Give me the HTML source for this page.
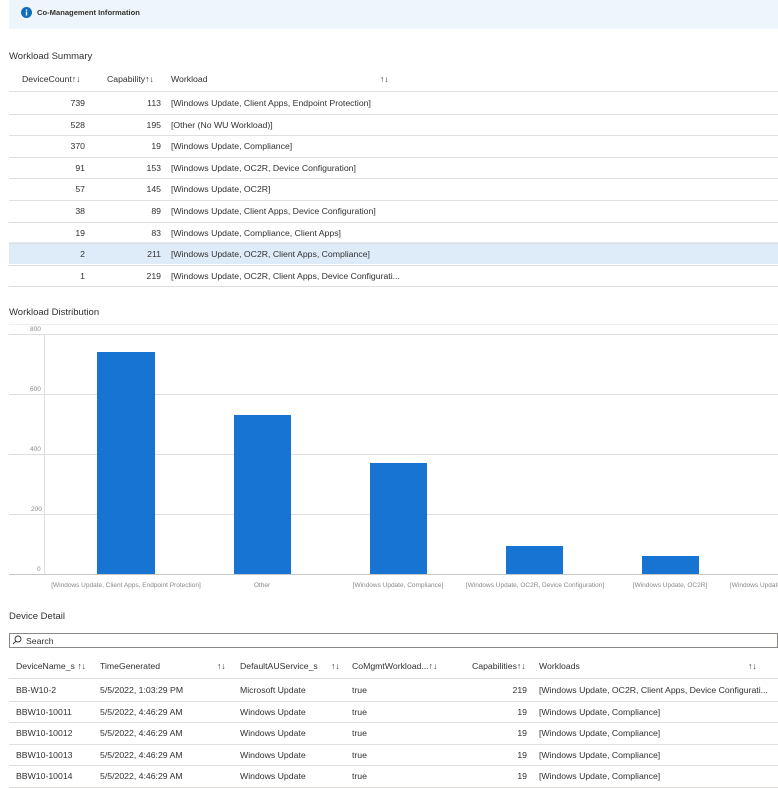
<!DOCTYPE html>
<html><head><meta charset="utf-8"><style>
*{margin:0;padding:0;box-sizing:border-box}
body{width:778px;height:785px;overflow:hidden;background:#fff;font-family:"Liberation Sans",sans-serif;font-size:8.7px;color:#323130;position:relative}
.a{position:absolute;white-space:nowrap}
.r{text-align:right}
.line{position:absolute;height:1px;background:#e1dfdd}
.bar{position:absolute;background:#1874d2}
.t{font-size:9.5px;color:#323130}
.ax{position:absolute;font-size:6.5px;color:#8a8886}
.xl{position:absolute;font-size:6.5px;color:#8a8886;text-align:center;white-space:nowrap}
.g{position:absolute;left:9px;right:0;height:1px;background:#e1dfdd}
</style></head><body>
<div class="a" style="left:9px;top:0;width:769px;height:29px;background:#eff5fc"></div>
<svg class="a" style="left:21px;top:7px" width="11" height="11"><circle cx="5.5" cy="5.5" r="5.5" fill="#0f6cbd"/><rect x="4.8" y="4.5" width="1.4" height="4" fill="#fff"/><rect x="4.8" y="2.4" width="1.4" height="1.4" fill="#fff"/></svg>
<div class="a" style="left:37px;top:8px;font-weight:bold;font-size:7.6px">Co-Management Information</div>

<div class="a t" style="left:9px;top:51px">Workload Summary</div>
<div class="a" style="left:22px;top:74px">DeviceCount↑↓</div>
<div class="a" style="left:107px;top:74px">Capability↑↓</div>
<div class="a" style="left:171px;top:74px">Workload</div>
<div class="a" style="left:380px;top:74px">↑↓</div>
<div class="line" style="left:9px;right:0;top:91px"></div>
<div class="a" style="left:9px;top:242px;width:769px;height:22px;background:#deecf9"></div>
<div id="ws"></div>

<div class="a t" style="left:9px;top:307px">Workload Distribution</div>
<div class="g" style="top:324px;background:#f0f0f0"></div>
<div class="g" style="top:334px"></div>
<div class="g" style="top:394px"></div>
<div class="g" style="top:454px"></div>
<div class="g" style="top:514px"></div>
<div class="g" style="top:574px;background:#c8c6c4"></div>
<div class="a" style="left:44px;top:334px;width:1px;height:240px;background:#e1dfdd"></div>
<div class="ax" style="left:30px;top:326px">800</div>
<div class="ax" style="left:30px;top:386px">600</div>
<div class="ax" style="left:30px;top:446px">400</div>
<div class="ax" style="left:31px;top:506px">200</div>
<div class="ax" style="left:37px;top:566px">0</div>
<div class="bar" style="left:97px;top:352px;width:58px;height:222px"></div>
<div class="bar" style="left:234px;top:415px;width:57px;height:159px"></div>
<div class="bar" style="left:370px;top:463px;width:57px;height:111px"></div>
<div class="bar" style="left:506px;top:546px;width:57px;height:28px"></div>
<div class="bar" style="left:642px;top:556px;width:57px;height:18px"></div>
<div class="xl" style="left:26px;width:200px;top:582px">[Windows Update, Client Apps, Endpoint Protection]</div>
<div class="xl" style="left:212px;width:100px;top:582px">Other</div>
<div class="xl" style="left:338px;width:120px;top:582px">[Windows Update, Compliance]</div>
<div class="xl" style="left:455px;width:160px;top:582px">[Windows Update, OC2R, Device Configuration]</div>
<div class="xl" style="left:610px;width:120px;top:582px">[Windows Update, OC2R]</div>
<div class="a" style="left:730px;top:582px;font-size:6.5px;color:#8a8886">[Windows Update</div>

<div class="a t" style="left:9px;top:611px">Device Detail</div>
<div class="a" style="left:9px;top:633px;width:769px;height:15px;border:1px solid #8a8886"></div>
<svg class="a" style="left:12px;top:635px" width="10" height="10"><circle cx="6" cy="4" r="3" fill="none" stroke="#323130" stroke-width="0.9"/><path d="M4 6L1 9" stroke="#323130" stroke-width="1"/></svg>
<div class="a" style="left:26px;top:636px">Search</div>
<div class="a" style="left:16px;top:661px">DeviceName_s ↑↓</div>
<div class="a" style="left:100px;top:661px">TimeGenerated</div>
<div class="a" style="left:217px;top:661px">↑↓</div>
<div class="a" style="left:240px;top:661px">DefaultAUService_s</div>
<div class="a" style="left:331px;top:661px">↑↓</div>
<div class="a" style="left:352px;top:661px">CoMgmtWorkload...↑↓</div>
<div class="a" style="left:472px;top:661px">Capabilities↑↓</div>
<div class="a" style="left:539px;top:661px">Workloads</div>
<div class="a" style="left:748px;top:661px">↑↓</div>
<div class="line" style="left:9px;right:0;top:678px"></div>
<div id="dd"></div>
<script>
var ws=[["739","113","[Windows Update, Client Apps, Endpoint Protection]"],["528","195","[Other (No WU Workload)]"],["370","19","[Windows Update, Compliance]"],["91","153","[Windows Update, OC2R, Device Configuration]"],["57","145","[Windows Update, OC2R]"],["38","89","[Windows Update, Client Apps, Device Configuration]"],["19","83","[Windows Update, Compliance, Client Apps]"],["2","211","[Windows Update, OC2R, Client Apps, Compliance]"],["1","219","[Windows Update, OC2R, Client Apps, Device Configurati..."]];
var h="";
ws.forEach(function(r,i){var y=98+i*21.6;
h+='<div class="a r" style="left:40px;width:45px;top:'+y+'px">'+r[0]+'</div><div class="a r" style="left:120px;width:41px;top:'+y+'px">'+r[1]+'</div><div class="a" style="left:171px;top:'+y+'px">'+r[2]+'</div><div class="line" style="left:9px;right:0;top:'+(y+15.5)+'px"></div>';});
document.getElementById("ws").outerHTML=h;
var dd=[["BB-W10-2","5/5/2022, 1:03:29 PM","Microsoft Update","219","[Windows Update, OC2R, Client Apps, Device Configurati..."],["BBW10-10011","5/5/2022, 4:46:29 AM","Windows Update","19","[Windows Update, Compliance]"],["BBW10-10012","5/5/2022, 4:46:29 AM","Windows Update","19","[Windows Update, Compliance]"],["BBW10-10013","5/5/2022, 4:46:29 AM","Windows Update","19","[Windows Update, Compliance]"],["BBW10-10014","5/5/2022, 4:46:29 AM","Windows Update","19","[Windows Update, Compliance]"]];
h="";
dd.forEach(function(r,i){var y=685+i*21.6;
h+='<div class="a" style="left:16px;top:'+y+'px">'+r[0]+'</div><div class="a" style="left:100px;top:'+y+'px">'+r[1]+'</div><div class="a" style="left:240px;top:'+y+'px">'+r[2]+'</div><div class="a" style="left:352px;top:'+y+'px">true</div><div class="a r" style="left:480px;width:47px;top:'+y+'px">'+r[3]+'</div><div class="a" style="left:539px;top:'+y+'px">'+r[4]+'</div><div class="line" style="left:9px;right:0;top:'+(y+15.5)+'px"></div>';});
document.getElementById("dd").outerHTML=h;
</script>
</body></html>
